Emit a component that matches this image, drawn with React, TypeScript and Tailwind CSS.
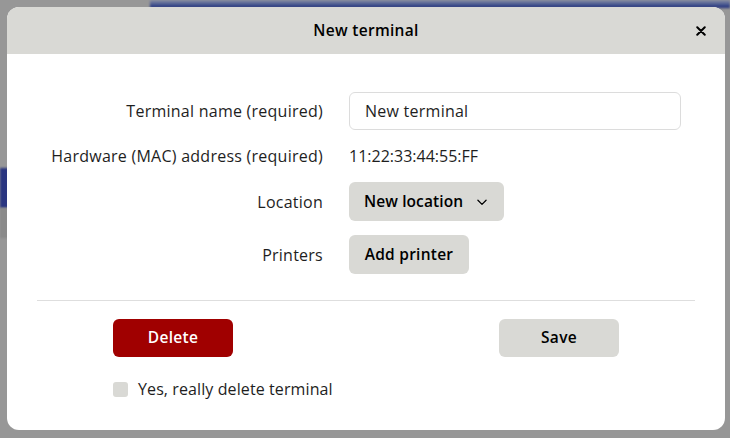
import { useState } from "react";

function ChevronDown() {
  return (
    <svg width="14" height="14" viewBox="0 0 24 24" fill="none" stroke="currentColor" strokeWidth="2.2" strokeLinecap="round" strokeLinejoin="round">
      <path d="M5 9l7 7 7-7" />
    </svg>
  );
}

function CloseIcon() {
  return (
    <svg width="10" height="10" viewBox="0 0 12 12" fill="none" stroke="currentColor" strokeWidth="2.4" strokeLinecap="round">
      <path d="M1.5 1.5l9 9M10.5 1.5l-9 9" />
    </svg>
  );
}

export default function App() {
  const [name, setName] = useState("New terminal");
  const [confirm, setConfirm] = useState(false);

  return (
    <div
      className="relative w-[730px] h-[438px] overflow-hidden bg-[#979797] text-[#1e1e1e]"
      style={{ fontFamily: '"Open Sans", sans-serif' }}
    >
      {/* blurred page behind the dialog */}
      <div className="absolute left-[150px] right-0 top-0 h-[8px] bg-gradient-to-b from-[#8a8fa6] to-[#1f2a7a] blur-[1px]" />
      <div className="absolute left-0 top-[168px] w-[10px] h-[40px] bg-[#2a3580] blur-[1px]" />
      <div className="absolute left-0 top-[208px] w-[10px] h-[30px] bg-[#8a8a8a] blur-[1px]" />

      <div className="relative p-[7px] pb-[8px]">
        <div className="w-[718px] h-[423px] rounded-[12px] bg-white overflow-hidden flex flex-col">
          <div className="h-[47px] shrink-0 bg-[#d9d9d5] flex items-center relative">
            <h2 className="flex-1 text-center text-[15.5px] font-semibold tracking-[0.3px] text-black">New terminal</h2>
            <button className="absolute right-[19px] top-[19px] text-black">
              <CloseIcon />
            </button>
          </div>

          <div className="px-[30px] pt-[38px]">
            <div className="grid grid-cols-[286px_1fr] gap-x-[26px] gap-y-[14px] items-center text-[16px] tracking-[0.25px]">
              <label className="text-right">Terminal name (required)</label>
              <input
                value={name}
                onChange={(e) => setName(e.target.value)}
                className="w-[332px] h-[38px] rounded-[6px] border border-[#dcdcdc] px-[15px] text-[16px] tracking-[0.25px] focus:outline-none"
              />

              <label className="text-right h-[24px] leading-[24px]">Hardware (MAC) address (required)</label>
              <div className="leading-[24px] tracking-normal">11:22:33:44:55:FF</div>

              <label className="text-right">Location</label>
              <div>
                <button className="h-[39px] w-[155px] rounded-[6px] bg-[#d9d9d5] flex items-center pl-[15px] gap-[12px] text-[15.5px] tracking-[0.1px] font-semibold text-black">
                  New location
                  <ChevronDown />
                </button>
              </div>

              <label className="text-right">Printers</label>
              <div>
                <button className="h-[39px] w-[120px] rounded-[6px] bg-[#d9d9d5] text-[15.5px] font-semibold text-black">
                  Add printer
                </button>
              </div>
            </div>

            <div className="mt-[26px] h-px bg-[#dedede]" />

            <div className="px-[76px] pt-[18px]">
              <div className="flex justify-between">
                <button className="w-[120px] h-[38px] rounded-[6px] bg-[#a00000] text-white font-semibold text-[15.5px] tracking-[0.3px]">
                  Delete
                </button>
                <button className="w-[120px] h-[38px] rounded-[6px] bg-[#d9d9d5] text-black font-semibold text-[15.5px] tracking-[0.3px]">
                  Save
                </button>
              </div>
              <label className="mt-[20px] flex items-center gap-[10px] text-[16px] tracking-[0.1px] cursor-pointer">
                <span
                  onClick={() => setConfirm(!confirm)}
                  className={`w-[15px] h-[15px] rounded-[3px] ${confirm ? "bg-[#a00000]" : "bg-[#d9d9d5]"}`}
                />
                Yes, really delete terminal
              </label>
            </div>
          </div>
        </div>
      </div>
    </div>
  );
}
